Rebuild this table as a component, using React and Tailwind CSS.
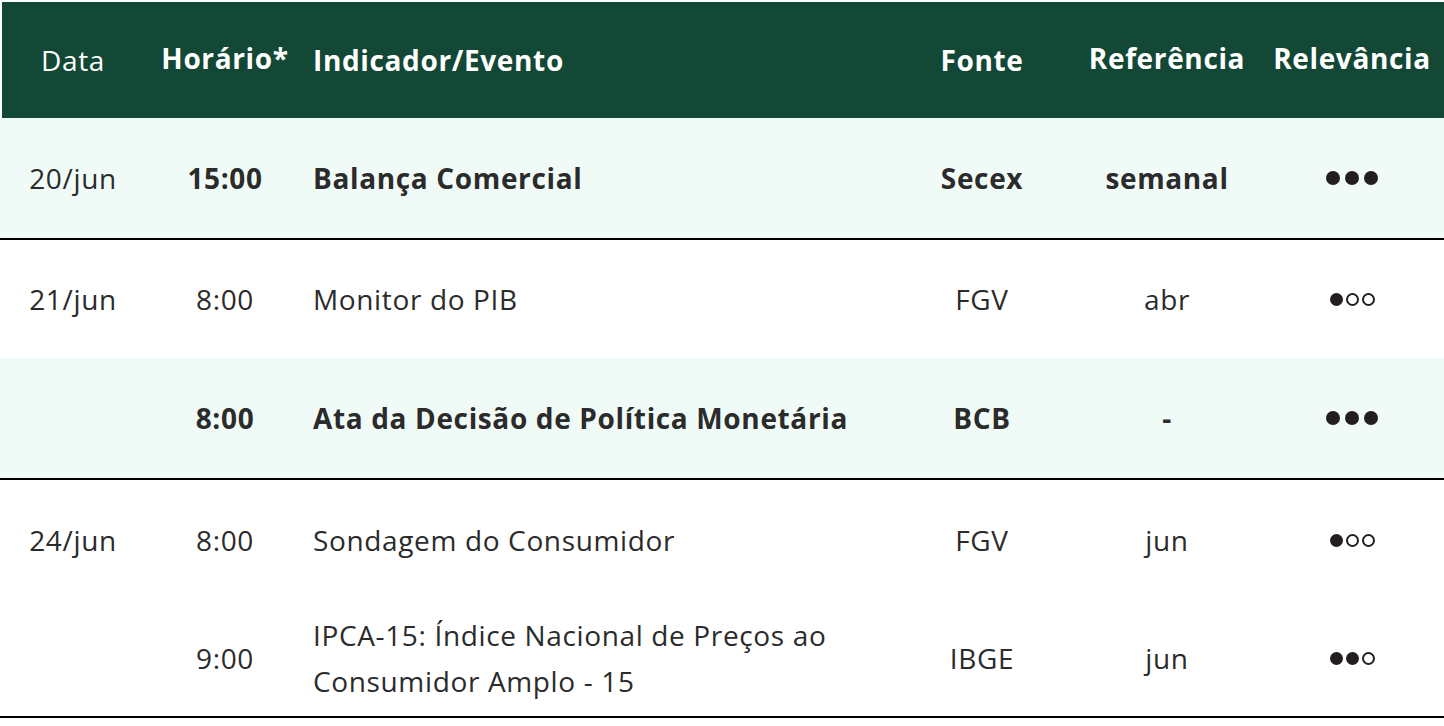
import React from "react";

const rows = [
  { date: "20/jun", time: "15:00", event: ["Balança Comercial"], src: "Secex", ref: "semanal", rel: 3, bold: true, shade: true, h: "h-[122px]", line: true },
  { date: "21/jun", time: "8:00", event: ["Monitor do PIB"], src: "FGV", ref: "abr", rel: 1, h: "h-[118px]" },
  { date: "", time: "8:00", event: ["Ata da Decisão de Política Monetária"], src: "BCB", ref: "-", rel: 3, bold: true, shade: true, h: "h-[122px]", line: true },
  { date: "24/jun", time: "8:00", event: ["Sondagem do Consumidor"], src: "FGV", ref: "jun", rel: 1, h: "h-[120px]" },
  { date: "", time: "9:00", event: ["IPCA-15: Índice Nacional de Preços ao", "Consumidor Amplo - 15"], src: "IBGE", ref: "jun", rel: 2, h: "h-[118px]", line: true },
];

const Dots = ({ n }) => {
  const big = n === 3;
  return (
    <div className={`flex items-center ${big ? "gap-[5px]" : "gap-[3px]"}`}>
      {[0, 1, 2].map((i) =>
        i < n ? (
          <span key={i} className={`${big ? "w-[14px] h-[14px]" : "w-[13px] h-[13px]"} rounded-full bg-[#231f20]`} />
        ) : (
          <span key={i} className="w-[13px] h-[13px] rounded-full border-[2px] border-[#231f20] bg-white" />
        )
      )}
    </div>
  );
};

export default function App() {
  return (
    <div className="w-[1444px] h-[726px] bg-white text-[#2b2b2b] pt-[2px] pl-[2px] tracking-[0.04em]" style={{ fontFamily: "'Open Sans', Lato, sans-serif" }}>
      {/* header */}
      <div className="flex h-[116px] bg-[#124835] text-white text-[28px] items-center">
        <div className="w-[142px] text-center">Data</div>
        <div className="w-[162px] text-center font-bold -mt-[5px]">Horário*</div>
        <div className="w-[596px] pl-[7px] font-bold">Indicador/Evento</div>
        <div className="w-[160px] text-center font-bold">Fonte</div>
        <div className="w-[210px] text-center font-bold -mt-[5px]">Referência</div>
        <div className="w-[172px] pr-[12px] text-center font-bold -mt-[5px]">Relevância</div>
      </div>

      {rows.map((r, i) => (
        <div
          key={i}
          className={`flex items-center text-[28px] -ml-[2px] pl-[2px] ${r.h} ${r.shade ? "bg-[#f0fbf7]" : "bg-white"} ${r.line ? "border-b-2 border-black" : ""} ${r.bold ? "font-bold" : ""}`}
        >
          <div className="w-[142px] text-center font-normal">{r.date}</div>
          <div className="w-[162px] text-center">{r.time}</div>
          <div className="w-[596px] pl-[7px] leading-[46px]">
            {r.event.map((t, j) => (
              <div key={j}>{t}</div>
            ))}
          </div>
          <div className="w-[160px] text-center">{r.src}</div>
          <div className="w-[210px] text-center">{r.ref}</div>
          <div className="w-[172px] pr-[12px] flex justify-center">
            <Dots n={r.rel} />
          </div>
        </div>
      ))}
    </div>
  );
}
